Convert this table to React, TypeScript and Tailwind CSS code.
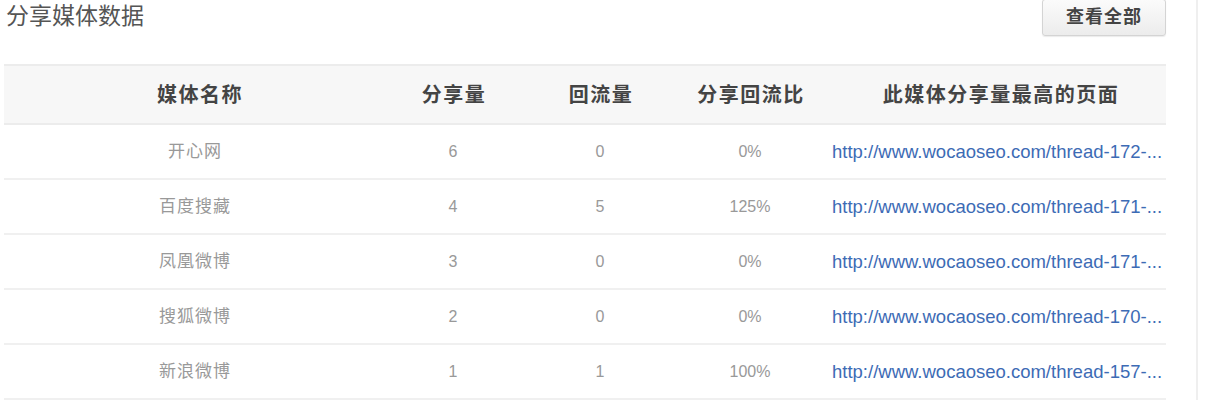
import React from "react";

const rows = [
  { name: "开心网", share: 6, back: 0, ratio: "0%", url: "http://www.wocaoseo.com/thread-172-..." },
  { name: "百度搜藏", share: 4, back: 5, ratio: "125%", url: "http://www.wocaoseo.com/thread-171-..." },
  { name: "凤凰微博", share: 3, back: 0, ratio: "0%", url: "http://www.wocaoseo.com/thread-171-..." },
  { name: "搜狐微博", share: 2, back: 0, ratio: "0%", url: "http://www.wocaoseo.com/thread-170-..." },
  { name: "新浪微博", share: 1, back: 1, ratio: "100%", url: "http://www.wocaoseo.com/thread-157-..." },
];

const App = () => {
  return (
    <div className="w-[1220px] h-[400px] bg-white flex overflow-hidden font-['Liberation_Sans','Noto_Sans_CJK_SC',sans-serif]">
      <section className="w-[1166px] pl-[4px]">
        {/* Header */}
        <div className="h-[64px] flex items-start justify-between">
          <h2 className="pl-[2px] pt-[1px] text-[23px] leading-[30px] text-[#555]">分享媒体数据</h2>
          <button className="h-[37px] w-[124px] -mt-[1px] rounded-[3px] border border-[#d4d4d4] bg-[linear-gradient(#fbfbfb,#ececec)] shadow-[0_1px_1px_rgba(0,0,0,0.08)] text-[18px] font-bold text-[#444] tracking-[1px]">
            查看全部
          </button>
        </div>

        {/* Table */}
        <table className="w-[1162px] table-fixed border-collapse">
          <colgroup>
            <col className="w-[382px]" />
            <col className="w-[134px]" />
            <col className="w-[160px]" />
            <col className="w-[140px]" />
            <col className="w-[346px]" />
          </colgroup>
          <thead>
            <tr className="h-[59px] bg-[#f7f7f7] border-t-2 border-b-2 border-[#ececec] text-[20px] font-bold text-[#444] tracking-[1.5px]">
              <th className="text-center pl-[10px]">媒体名称</th>
              <th className="text-center pl-[2px]">分享量</th>
              <th className="text-center pl-[2px]">回流量</th>
              <th className="text-center pl-[2px]">分享回流比</th>
              <th className="text-center pl-[16px]">此媒体分享量最高的页面</th>
            </tr>
          </thead>
          <tbody>
            {rows.map((r, i) => (
              <tr key={i} className="h-[55px] border-b-2 border-[#f0f0f0] text-[#999]">
                <td className="text-center text-[17px] tracking-[1px]">{r.name}</td>
                <td className="text-center text-[16px]">{r.share}</td>
                <td className="text-center text-[16px]">{r.back}</td>
                <td className="text-center text-[16px]">{r.ratio}</td>
                <td className="pl-[12px] text-[18.5px] text-[#3d6bb5] whitespace-nowrap">{r.url}</td>
              </tr>
            ))}
          </tbody>
        </table>
      </section>
      <div className="ml-[30px] w-[2px] h-full bg-[#efefef]" />
    </div>
  );
};

export default App;
